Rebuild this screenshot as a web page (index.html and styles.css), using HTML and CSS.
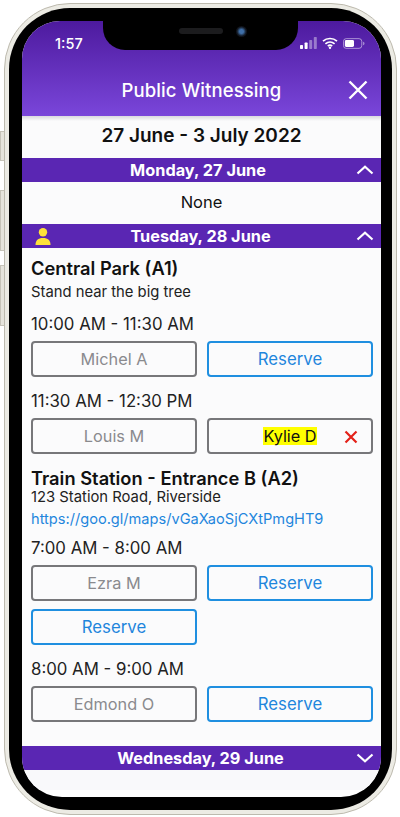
FILE: index.html
```html
<!DOCTYPE html>
<html lang="en">
<head>
<meta charset="utf-8">
<title>Public Witnessing</title>
<link rel="stylesheet" href="styles.css">
</head>
<body>
<div class="phone">
  <span class="side-btn side-a"></span>
  <span class="side-btn side-b"></span>
  <span class="side-btn side-c"></span>
  <div class="bezel">
    <div class="screen">
      <div class="notch"><span class="speaker"></span><span class="camera"></span></div>
      <header class="appbar">
        <div class="status">
          <span class="time">1:57</span>
          <span class="status-icons">
            <svg class="signal" viewBox="0 0 17 12" width="17" height="12"><rect x="0" y="8" width="3" height="4" rx=".7" fill="#fff"/><rect x="4.6" y="5.5" width="3" height="6.5" rx=".7" fill="#fff"/><rect x="9.2" y="3" width="3" height="9" rx=".7" fill="#fff" opacity=".4"/><rect x="13.8" y="0" width="3" height="12" rx=".7" fill="#fff" opacity=".4"/></svg>
            <svg class="wifi" viewBox="0 0 16 12" width="16" height="12"><path d="M1 4.2C5 .6 11 .6 15 4.2M3.4 6.800c2.700-2.400 6.500-2.400 9.200 0M5.800 9.100c1.300-1.100 3.100-1.100 4.400 0" fill="none" stroke="#fff" stroke-width="1.700"/><circle cx="8" cy="10.800" r="1.200" fill="#fff"/></svg>
            <svg class="battery" viewBox="0 0 24 12" width="22" height="11"><rect x=".5" y=".7" width="20" height="10.600" rx="3" fill="none" stroke="#fff" stroke-opacity=".55"/><rect x="2" y="2.200" width="10" height="7.600" rx="1.600" fill="#fff"/><path d="M22 4.200c1 .3 1.400 1 1.400 1.800s-.4 1.500-1.400 1.800z" fill="#fff" opacity=".55"/></svg>
          </span>
        </div>
        <div class="titlebar">
          <h1 class="title">Public Witnessing</h1>
          <svg class="close" viewBox="0 0 20 20" width="20" height="20"><path d="M1.500 1.500l17 17M18.500 1.500l-17 17" stroke="#fff" stroke-width="2.400" fill="none"/></svg>
        </div>
      </header>
      <div class="week">27 June - 3 July 2022</div>

      <div class="day-bar day-first">
        <span class="day-name">Monday, 27 June</span>
        <svg class="chev" viewBox="0 0 18 10" width="18" height="10"><path d="M1.500 8.500L9 1.800l7.500 6.700" fill="none" stroke="#fff" stroke-width="2.200"/></svg>
      </div>
      <div class="none-row">None</div>

      <div class="day-bar">
        <svg class="person" viewBox="0 0 16 17" width="16" height="17"><circle cx="8" cy="4.300" r="4.200" fill="#fde13a"/><path d="M.5 17c0-4.800 2.500-7 7.500-7s7.500 2.200 7.500 7z" fill="#fde13a"/></svg>
        <span class="day-name">Tuesday, 28 June</span>
        <svg class="chev" viewBox="0 0 18 10" width="18" height="10"><path d="M1.500 8.500L9 1.800l7.500 6.700" fill="none" stroke="#fff" stroke-width="2.200"/></svg>
      </div>

      <section class="day-body">
        <h2 class="place">Central Park (A1)</h2>
        <p class="note note-a">Stand near the big tree</p>
        <p class="slot-time slot-first">10:00 AM - 11:30 AM</p>
        <div class="slots">
          <div class="slot taken">Michel A</div>
          <div class="slot open">Reserve</div>
        </div>
        <p class="slot-time">11:30 AM - 12:30 PM</p>
        <div class="slots">
          <div class="slot taken">Louis M</div>
          <div class="slot mine"><mark class="me">Kylie D</mark>
            <svg class="remove" viewBox="0 0 14 14" width="14" height="14"><path d="M1.500 1.500l11 11M12.500 1.500l-11 11" stroke="#e32119" stroke-width="2.200" fill="none"/></svg>
          </div>
        </div>
        <h2 class="place place-b">Train Station - Entrance B (A2)</h2>
        <p class="note">123 Station Road, Riverside</p>
        <a class="link" href="#">https://goo.gl/maps/vGaXaoSjCXtPmgHT9</a>
        <p class="slot-time slot-second">7:00 AM - 8:00 AM</p>
        <div class="slots">
          <div class="slot taken">Ezra M</div>
          <div class="slot open">Reserve</div>
          <div class="slot open">Reserve</div>
        </div>
        <p class="slot-time">8:00 AM - 9:00 AM</p>
        <div class="slots">
          <div class="slot taken">Edmond O</div>
          <div class="slot open">Reserve</div>
        </div>
      </section>

      <div class="day-bar">
        <span class="day-name">Wednesday, 29 June</span>
        <svg class="chev" viewBox="0 0 18 10" width="18" height="10"><path d="M1.500 1.500L9 8.200l7.500-6.700" fill="none" stroke="#fff" stroke-width="2.200"/></svg>
      </div>
      <div class="foot"></div>
    </div>
  </div>
</div>
</body>
</html>
```
FILE: styles.css
```css
* { box-sizing: border-box; }
html, body { margin: 0; padding: 0; background: #fff; }
body {
  width: 400px;
  height: 817px;
  overflow: hidden;
  font-family: Inter, "Liberation Sans", sans-serif;
  color: #111;
}
.phone {
  position: relative;
  width: 393px;
  height: 812px;
  margin: 3px 0 0 4px;
  padding: 4px;
  border: 1px solid #bdbaae;
  border-radius: 66px;
  background: #ecebe4;
}
.side-btn {
  position: absolute;
  left: -5px;
  width: 4px;
  background: #e6e4dc;
  border: 1px solid #c6c3b8;
  border-right: 0;
}
.side-a { top: 127px; height: 30px; }
.side-b { top: 186px; height: 61px; }
.side-c { top: 261px; height: 61px; }
.bezel {
  width: 100%;
  height: 100%;
  padding: 13px 11px 12px 13px;
  border-radius: 61px;
  background: #000;
}
.screen {
  position: relative;
  width: 359px;
  height: 776px;
  overflow: hidden;
  border-radius: 38px 38px 40px 40px;
  background: #fff;
}
.notch {
  position: absolute;
  top: 0;
  left: 81px;
  z-index: 2;
  display: flex;
  align-items: center;
  width: 195px;
  height: 29px;
  padding: 0 0 9px 76px;
  border-radius: 0 0 22px 22px;
  background: #000;
}
.speaker { width: 44px; height: 6px; border-radius: 3px; background: #1c1c1e; }
.camera {
  width: 11px;
  height: 11px;
  margin-left: 13px;
  border-radius: 50%;
  background: radial-gradient(circle, #3f6fa8 0 25%, #10141c 60%);
}
.appbar {
  height: 95px;
  background: linear-gradient(180deg, #4d1a9e, #7a46da);
  color: #fff;
}
.status {
  display: flex;
  justify-content: space-between;
  align-items: center;
  height: 44px;
  padding: 0 16px 0 33px;
}
.time { font-size: 14.500px; font-weight: 500; }
.status-icons { display: flex; align-items: center; gap: 5px; }
.titlebar {
  position: relative;
  display: flex;
  justify-content: center;
  align-items: center;
  height: 49px;
}
.title { margin: 0; font-size: 18.500px; font-weight: 500; letter-spacing: .1px; }
.close { position: absolute; right: 13px; top: 15px; }
.week {
  height: 42px;
  padding-top: 9px;
  text-align: center;
  font-size: 19px;
  line-height: 22px;
  font-weight: 600;
  background: linear-gradient(180deg, #d9d9de, #fbfbfc 5px);
}
.day-bar {
  position: relative;
  display: flex;
  justify-content: center;
  align-items: center;
  height: 24px;
  padding-right: 2px;
  background: #5a26b3;
  color: #fff;
}
.day-first { padding-right: 7px; }
.day-name { font-size: 16.300px; font-weight: 700; }
.chev { position: absolute; right: 7px; top: 7px; }
.person { position: absolute; left: 13px; top: 4px; }
.none-row {
  height: 42px;
  text-align: center;
  font-size: 16.500px;
  line-height: 41px;
  background: #fbfbfc;
}
.day-body { height: 498px; padding: 10px 8px 0 9px; background: #fbfbfc; }
.place { margin: 0; font-size: 18.300px; line-height: 20px; font-weight: 600; }
.place-b { margin-top: 15px; line-height: 19px; }
.note { margin: 0; font-size: 14.800px; line-height: 18px; color: #222; }
.note-a { margin-top: 5px; }
.slot-time { margin: 14px 0 7px; font-size: 16.800px; line-height: 20px; color: #222; }
.slot-first { margin-top: 13px; }
.slot-second { margin-top: 10px; }
.slots { display: grid; grid-template-columns: 166px 166px; gap: 8px 10px; }
.slot {
  display: flex;
  justify-content: center;
  align-items: center;
  height: 36px;
  border: 2px solid #77777a;
  border-radius: 4px;
  font-size: 16.300px;
}
.taken { color: #8a8a8e; }
.open { border-color: #1f8fe0; color: #1f86dc; font-size: 16.800px; }
.mine { position: relative; color: #111; }
.me { background: #ffff00; color: #111; line-height: 18px; }
.remove { position: absolute; right: 13px; top: 10px; }
.link { display: block; margin-top: 4px; font-size: 14.600px; line-height: 18px; color: #1f86dc; text-decoration: none; }
.foot { height: 20px; background: #f9f9fb; }
```
